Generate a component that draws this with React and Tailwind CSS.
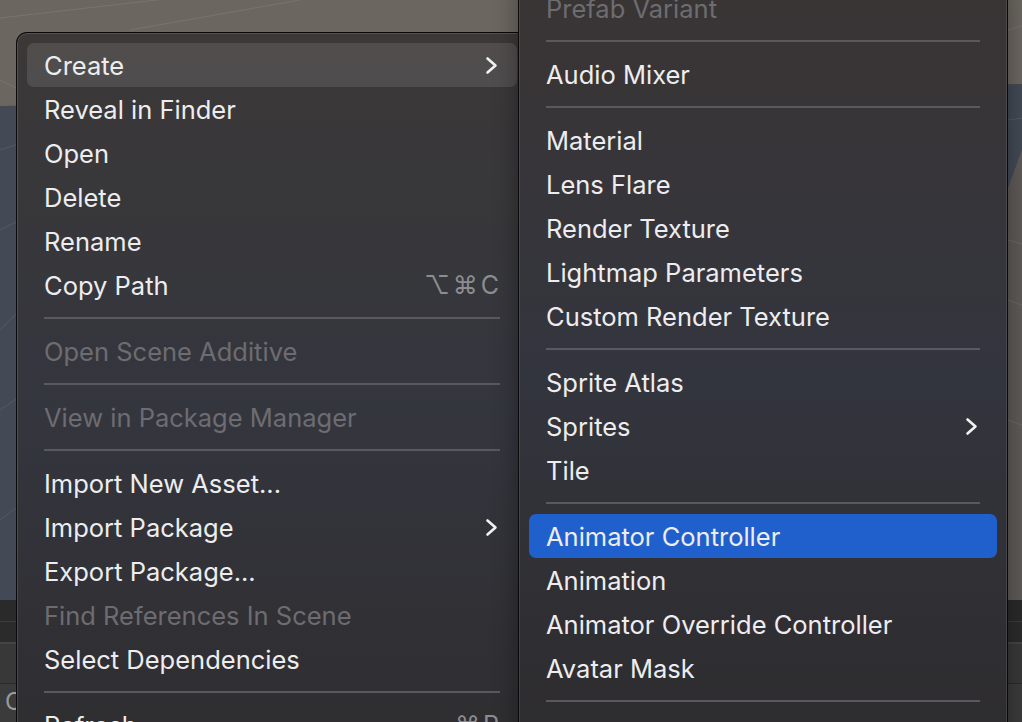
import React from "react";

const Chevron = () => (
  <svg width="13" height="19" viewBox="0 0 13 19" className="shrink-0">
    <path d="M2.5 2.5 L10.5 9.5 L2.5 16.5" fill="none" stroke="#f2f2f2" strokeWidth="2.6" strokeLinecap="round" strokeLinejoin="round" />
  </svg>
);

function Row({ label, disabled, shortcut, sub, active, blue }) {
  let bg = "";
  if (active) bg = "bg-white/[0.11]";
  if (blue) bg = "bg-[#2060cc]";
  return (
    <div className={`h-[44px] mx-[10px] rounded-[7px] pl-[17px] pr-[19px] flex items-center justify-between ${bg}`}>
      <span className={`text-[25.5px] leading-none pt-[1px] whitespace-nowrap ${disabled ? "text-[#6d6c71]" : "text-[#ededef]"}`}>{label}</span>
      {shortcut && (
        <span className="text-[25px] leading-none pt-[1px] text-[#8c8c91] tracking-[3px] mr-[-4px] whitespace-nowrap">{shortcut}</span>
      )}
      {sub && <Chevron />}
    </div>
  );
}

const Sep = () => (
  <div className="h-[22px] px-[27px] flex items-center">
    <div className="h-[2px] w-full bg-[#59595e]" />
  </div>
);

const leftItems = [
  { label: "Create", sub: true, active: true },
  { label: "Reveal in Finder" },
  { label: "Open" },
  { label: "Delete" },
  { label: "Rename" },
  { label: "Copy Path", shortcut: "⌥⌘C" },
  "sep",
  { label: "Open Scene Additive", disabled: true },
  "sep",
  { label: "View in Package Manager", disabled: true },
  "sep",
  { label: "Import New Asset..." },
  { label: "Import Package", sub: true },
  { label: "Export Package..." },
  { label: "Find References In Scene", disabled: true },
  { label: "Select Dependencies" },
  "sep",
  { label: "Refresh", shortcut: "⌘R" },
];

const rightItems = [
  { label: "Prefab Variant", disabled: true },
  "sep",
  { label: "Audio Mixer" },
  "sep",
  { label: "Material" },
  { label: "Lens Flare" },
  { label: "Render Texture" },
  { label: "Lightmap Parameters" },
  { label: "Custom Render Texture" },
  "sep",
  { label: "Sprite Atlas" },
  { label: "Sprites", sub: true },
  { label: "Tile" },
  "sep",
  { label: "Animator Controller", blue: true },
  { label: "Animation" },
  { label: "Animator Override Controller" },
  { label: "Avatar Mask" },
  "sep",
  { label: "Timeline" },
];

function Menu({ items, className }) {
  return (
    <div className={className}>
      {items.map((it, i) => (it === "sep" ? <Sep key={i} /> : <Row key={i} {...it} />))}
    </div>
  );
}

export default function App() {
  return (
    <div className="relative w-[1022px] h-[722px] overflow-hidden bg-[#67625d] font-['Inter','DejaVu_Sans',sans-serif]">
      <div className="flex flex-col h-full">
        <div className="h-[600px] shrink-0">
          <svg width="1022" height="600" viewBox="0 0 1022 600" className="block">
            <rect width="1022" height="600" fill="#67625d" />
            <rect width="1022" height="110" fill="#6b6660" />
            <polygon points="0,106 1022,84 1022,150 860,600 0,600" fill="#434a55" />
            <polygon points="1008,190 1022,150 1022,600 1008,600" fill="#5e5a57" />
            <g stroke="rgba(255,255,255,0.09)" strokeWidth="1" fill="none">
              <line x1="0" y1="18" x2="330" y2="-20" />
              <line x1="130" y1="30" x2="300" y2="0" />
              <line x1="0" y1="80" x2="40" y2="100" />
              <line x1="0" y1="150" x2="30" y2="140" />
              <line x1="0" y1="230" x2="30" y2="215" />
              <line x1="0" y1="330" x2="30" y2="300" />
              <line x1="0" y1="410" x2="30" y2="390" />
              <line x1="0" y1="520" x2="40" y2="490" />
              <line x1="1008" y1="30" x2="1022" y2="26" />
              <line x1="1008" y1="120" x2="1022" y2="118" />
              <line x1="1008" y1="240" x2="1022" y2="244" />
              <line x1="1008" y1="300" x2="1022" y2="305" />
              <line x1="1008" y1="420" x2="1022" y2="425" />
            </g>
          </svg>
        </div>
        <div className="h-[22px] bg-[#2a2a2a] border-b border-[#3c3c3c]" />
        <div className="h-[22px] bg-[#2b2b2b] border-b-2 border-[#444]" />
        <div className="h-[40px] bg-[#383838] border-b border-[#2a2a2a]" />
        <div className="flex-1 bg-[#3b3b3b] pl-[5px] pt-[6px] flex">
          <div className="w-[11px] overflow-hidden text-[24px] text-[#9a9a9a] leading-none whitespace-nowrap">C</div>
        </div>
      </div>

      <Menu
        items={leftItems}
        className="absolute left-[16px] top-[32px] w-[512px] h-[760px] rounded-[11px] border border-black/80 shadow-[inset_0_0_0_1px_rgba(255,255,255,0.13)] pt-[10px] bg-linear-to-b from-[#3b3837] via-[#34363e] to-[#2e2c2e]"
      />
      <Menu
        items={rightItems}
        className="absolute left-[518px] top-[-25px] w-[490px] h-[800px] rounded-[11px] border border-black/80 shadow-[inset_0_0_0_1px_rgba(255,255,255,0.1),0_8px_24px_rgba(0,0,0,0.35)] pt-[10px] bg-linear-to-b from-[#3a3534] via-[#33353e] to-[#2d2b2c]"
      />
    </div>
  );
}
